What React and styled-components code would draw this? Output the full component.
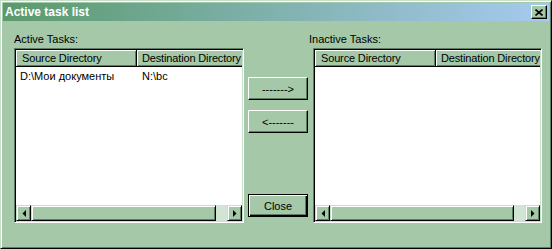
import React from "react";
import styled, { createGlobalStyle } from "styled-components";

const FACE = "#a4c8a8";
const SHADOW = "#5e7e64";
const LIGHT = "#ffffff";

const GlobalStyle = createGlobalStyle`
  html, body {
    margin: 0;
    padding: 0;
    background-color: ${FACE};
  }
  body {
    font-family: "Liberation Sans", Arial, sans-serif;
    font-size: 11px;
    color: #000;
  }
`;

const Window = styled.div`
  width: 552px;
  height: 249px;
  box-sizing: border-box;
  background-color: ${FACE};
  border: 1px solid;
  border-color: #c8dfcb #000 #000 #c8dfcb;
  box-shadow: inset 1px 1px ${LIGHT}, inset -1px -1px ${SHADOW};
  padding: 2px;
  display: flex;
  flex-direction: column;
`;

const TitleBar = styled.div`
  height: 18px;
  flex-shrink: 0;
  display: flex;
  align-items: center;
  justify-content: space-between;
  padding: 0 2px;
  background: linear-gradient(to right, #5a9a6c, #a6caf0);
`;

const TitleText = styled.span`
  font-size: 12px;
  font-weight: 700;
  color: white;
  white-space: nowrap;
`;

const TitleButton = styled.div`
  width: 16px;
  height: 14px;
  box-sizing: border-box;
  background-color: ${FACE};
  border: 1px solid;
  border-color: ${LIGHT} #000 #000 ${LIGHT};
  box-shadow: inset -1px -1px ${SHADOW};
  display: flex;
  align-items: center;
  justify-content: center;
`;

const Content = styled.div`
  display: flex;
  flex-direction: row;
  padding: 12px 0 0 11px;
`;

const Panel = styled.div`
  display: flex;
  flex-direction: column;
  width: ${(props) => props.width}px;
  margin-left: ${(props) => props.offset || 0}px;
`;

const Label = styled.div`
  height: 13px;
  line-height: 13px;
  margin-bottom: 2px;
  white-space: nowrap;
`;

const ListView = styled.div`
  width: ${(props) => props.width}px;
  height: 175px;
  margin-left: ${(props) => props.indent || 0}px;
  box-sizing: border-box;
  border: 1px solid;
  border-color: ${SHADOW} ${LIGHT} ${LIGHT} ${SHADOW};
  box-shadow: inset 1px 1px #000, inset -1px -1px #c8dfcb;
  padding: 1px;
  background-color: white;
  display: flex;
  flex-direction: column;
  overflow: hidden;
`;

const Header = styled.div`
  display: flex;
  flex-direction: row;
  height: 17px;
  flex-shrink: 0;
  overflow: hidden;
`;

const HeaderCell = styled.div`
  width: ${(props) => props.width}px;
  flex-shrink: 0;
  box-sizing: border-box;
  background-color: ${FACE};
  border-right: 1px solid #000;
  border-bottom: 1px solid #000;
  box-shadow: inset 1px 1px ${LIGHT}, inset -1px -1px ${SHADOW};
  padding-left: ${(props) => props.pad}px;
  line-height: 16px;
  letter-spacing: -0.15px;
  white-space: nowrap;
  overflow: hidden;
`;

const Rows = styled.div`
  flex: 1;
  overflow: hidden;
`;

const Row = styled.div`
  display: flex;
  flex-direction: row;
  height: 16px;
  padding-top: 1px;
`;

const Cell = styled.div`
  width: ${(props) => props.width}px;
  flex-shrink: 0;
  box-sizing: border-box;
  padding-left: ${(props) => props.pad}px;
  line-height: 16px;
  white-space: nowrap;
  overflow: hidden;
`;

const ScrollBar = styled.div`
  display: flex;
  flex-direction: row;
  height: 16px;
  flex-shrink: 0;
  background-color: #d2e4d4;
`;

const Raised = styled.div`
  width: ${(props) => props.width}px;
  flex-shrink: 0;
  box-sizing: border-box;
  background-color: ${FACE};
  border: 1px solid;
  border-color: #c8dfcb #000 #000 #c8dfcb;
  box-shadow: inset 1px 1px ${LIGHT}, inset -1px -1px ${SHADOW};
  display: flex;
  align-items: center;
  justify-content: center;
`;

const Track = styled.div`
  flex: 1;
`;

const Middle = styled.div`
  width: 60px;
  margin-left: 4px;
  display: flex;
  flex-direction: column;
  padding: 44px 0 6px;
  box-sizing: border-box;
`;

const Button = styled.button`
  width: 60px;
  height: 23px;
  margin: 0 0 ${(props) => props.gap || 0}px;
  padding: 0;
  box-sizing: border-box;
  font-family: inherit;
  font-size: 11px;
  color: #000;
  background-color: ${FACE};
  border: 1px solid;
  border-color: ${(props) =>
    props.primary ? "#000" : `${LIGHT} #000 #000 ${LIGHT}`};
  box-shadow: ${(props) =>
    props.primary
      ? `inset 1px 1px ${LIGHT}, inset -1px -1px #000, inset -2px -2px ${SHADOW}`
      : `inset -1px -1px ${SHADOW}`};
  margin-top: ${(props) => (props.primary ? "auto" : "0")};
  white-space: nowrap;
`;

const Arrow = ({ dir }) => (
  <svg width="4" height="7" viewBox="0 0 4 7">
    {dir === "left" ? (
      <polygon points="4,0 4,7 0.5,3.5" fill="#000" />
    ) : (
      <polygon points="0,0 0,7 3.5,3.5" fill="#000" />
    )}
  </svg>
);

function TaskList({ width, indent, rows }) {
  return (
    <ListView width={width} indent={indent}>
      <Header>
        <HeaderCell width={121} pad={6}>
          Source Directory
        </HeaderCell>
        <HeaderCell width={150} pad={5}>
          Destination Directory
        </HeaderCell>
      </Header>
      <Rows>
        {rows.map((item, index) => (
          <Row key={index}>
            <Cell width={121} pad={4}>
              {item.source}
            </Cell>
            <Cell width={150} pad={5}>
              {item.dest}
            </Cell>
          </Row>
        ))}
      </Rows>
      <ScrollBar>
        <Raised width={15}>
          <Arrow dir="left" />
        </Raised>
        <Raised width={width - 4 - 15 - 15 - 11} />
        <Track />
        <Raised width={15}>
          <Arrow dir="right" />
        </Raised>
      </ScrollBar>
    </ListView>
  );
}

export default function App() {
  const active = [{ source: "D:\\Мои документы", dest: "N:\\bc" }];

  return (
    <>
      <GlobalStyle />
      <Window>
        <TitleBar>
          <TitleText>Active task list</TitleText>
          <TitleButton>
            <svg width="8" height="7" viewBox="0 0 8 7">
              <path
                d="M0.5 0.5 L7.5 6.5 M7.5 0.5 L0.5 6.5"
                stroke="#000"
                strokeWidth="1.6"
              />
            </svg>
          </TitleButton>
        </TitleBar>
        <Content>
          <Panel width={230}>
            <Label>Active Tasks:</Label>
            <TaskList width={230} rows={active} />
          </Panel>
          <Middle>
            <Button gap={10}>-------&gt;</Button>
            <Button>&lt;-------</Button>
            <Button primary>Close</Button>
          </Middle>
          <Panel width={233} offset={1}>
            <Label>Inactive Tasks:</Label>
            <TaskList width={229} indent={4} rows={[]} />
          </Panel>
        </Content>
      </Window>
    </>
  );
}
